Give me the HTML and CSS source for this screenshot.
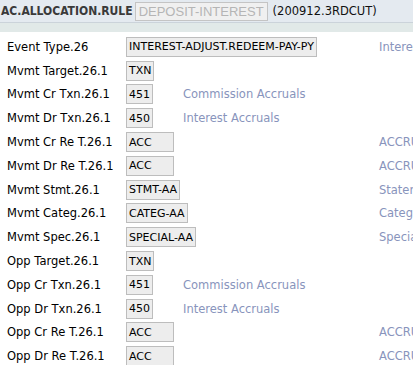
FILE: index.html
```html
<!DOCTYPE html>
<html lang="en">
<head>
    <meta charset="UTF-8">
    <meta name="viewport" content="width=device-width, initial-scale=1.0">
    <title>AC.ALLOCATION.RULE</title>
    <link rel="stylesheet" href="styles.css">
</head>
<body>
    <div class="header">
        <span class="app">AC.ALLOCATION.RULE</span>
        <span class="record">DEPOSIT-INTEREST</span>
        <span class="version">(200912.3RDCUT)</span>
    </div>
    <div class="band"></div>

    <div class="form">
        <div class="row">
            <span class="label">Event Type.26</span>
            <span class="cell"><span class="field">INTEREST-ADJUST.REDEEM-PAY-PY</span></span>
            <span class="enri">Interest Adjustment Redeem Pay</span>
        </div>
        <div class="row">
            <span class="label">Mvmt Target.26.1</span>
            <span class="cell"><span class="field">TXN</span></span>
        </div>
        <div class="row">
            <span class="label">Mvmt Cr Txn.26.1</span>
            <span class="cell"><span class="field">451</span><span class="enri inline">Commission Accruals</span></span>
        </div>
        <div class="row">
            <span class="label">Mvmt Dr Txn.26.1</span>
            <span class="cell"><span class="field">450</span><span class="enri inline">Interest Accruals</span></span>
        </div>
        <div class="row">
            <span class="label">Mvmt Cr Re T.26.1</span>
            <span class="cell"><span class="field acc">ACC</span></span>
            <span class="enri">ACCRUAL</span>
        </div>
        <div class="row">
            <span class="label">Mvmt Dr Re T.26.1</span>
            <span class="cell"><span class="field acc">ACC</span></span>
            <span class="enri">ACCRUAL</span>
        </div>
        <div class="row">
            <span class="label">Mvmt Stmt.26.1</span>
            <span class="cell"><span class="field">STMT-AA</span></span>
            <span class="enri">Statement</span>
        </div>
        <div class="row">
            <span class="label">Mvmt Categ.26.1</span>
            <span class="cell"><span class="field">CATEG-AA</span></span>
            <span class="enri">Category</span>
        </div>
        <div class="row">
            <span class="label">Mvmt Spec.26.1</span>
            <span class="cell"><span class="field">SPECIAL-AA</span></span>
            <span class="enri">Special</span>
        </div>
        <div class="row">
            <span class="label">Opp Target.26.1</span>
            <span class="cell"><span class="field">TXN</span></span>
        </div>
        <div class="row">
            <span class="label">Opp Cr Txn.26.1</span>
            <span class="cell"><span class="field">451</span><span class="enri inline">Commission Accruals</span></span>
        </div>
        <div class="row">
            <span class="label">Opp Dr Txn.26.1</span>
            <span class="cell"><span class="field">450</span><span class="enri inline">Interest Accruals</span></span>
        </div>
        <div class="row">
            <span class="label">Opp Cr Re T.26.1</span>
            <span class="cell"><span class="field acc">ACC</span></span>
            <span class="enri">ACCRUAL</span>
        </div>
        <div class="row">
            <span class="label">Opp Dr Re T.26.1</span>
            <span class="cell"><span class="field acc">ACC</span></span>
            <span class="enri">ACCRUAL</span>
        </div>
    </div>
</body>
</html>
```

FILE: styles.css
```css
*, *::before, *::after {
    box-sizing: border-box;
}

body {
    margin: 0;
    overflow: hidden;
    white-space: nowrap;
    font: 11.5px "DejaVu Sans", Verdana, sans-serif;
    color: #000;
    background-color: #fff;
}

div.header {
    display: flex;
    align-items: center;
    height: 23px;
    padding-left: 1px;
    background-color: #e4eaf0;
    border-bottom: 1px solid #cbd3da;
}

span.app {
    font: bold 12px "DejaVu Sans Condensed", "DejaVu Sans", sans-serif;
    color: #3a3a3a;
}

span.record {
    display: inline-flex;
    align-items: center;
    height: 19px;
    margin-left: 2px;
    padding: 0 3px;
    font: 13px "Liberation Sans", Arial, sans-serif;
    color: #b5b5b5;
    background-color: #f0f0f0;
    border: 1px solid #c4c4c4;
}

span.version {
    margin-left: 5px;
    color: #111;
}

div.band {
    height: 9px;
    background-color: #e1e9e8;
}

div.form {
    padding-top: 3px;
}

div.row {
    display: grid;
    grid-template-columns: 126px 253px auto;
    align-items: center;
    height: 23.8px;
}

span.label {
    padding-left: 7px;
}

span.cell {
    display: flex;
    align-items: center;
}

span.field {
    display: inline-flex;
    align-items: center;
    height: 20px;
    padding: 0 2px;
    font-size: 11px;
    background-color: #ededed;
    border: 1px solid #bdbdbd;
}

span.field.acc {
    width: 48px;
}

span.enri {
    color: #8894bc;
}

span.enri.inline {
    margin-left: 30px;
}
```
